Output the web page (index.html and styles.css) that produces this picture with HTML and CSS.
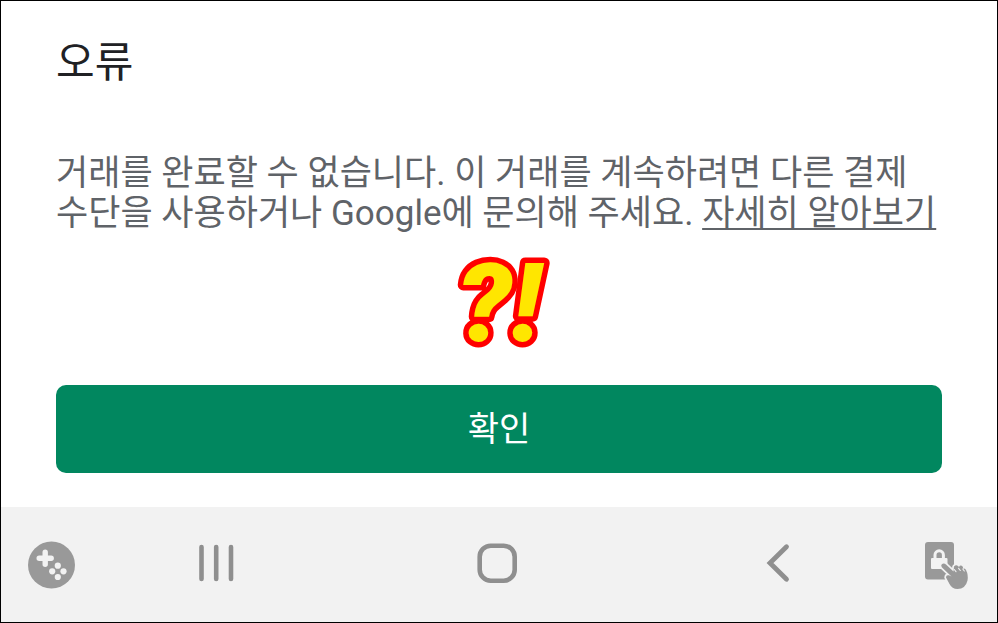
FILE: index.html
```html
<!DOCTYPE html>
<html lang="ko">
<head>
<meta charset="utf-8">
<meta name="viewport" content="width=device-width, initial-scale=1">
<title>오류</title>
<link rel="stylesheet" href="styles.css">
</head>
<body>
<main class="sheet">
  <h1 class="title">오류</h1>
  <p class="message">거래를 완료할 수 없습니다. 이 거래를 계속하려면 다른 결제 수단을 사용하거나 Google에 문의해 주세요. <a class="more" href="#">자세히 알아보기</a></p>
  <svg class="mark" width="112" height="100" viewBox="0 0 112 100"><text x="56" y="90" text-anchor="middle">?!</text></svg>
  <button class="confirm" type="button">확인</button>
</main>
<nav class="navbar">
  <button class="nav-button edge" type="button" aria-label="게임 도구">
    <svg width="48" height="48" viewBox="0 0 48 48">
      <circle cx="24.500" cy="24" r="23.5" fill="#999"/>
      <path d="M18.200 11.3v12M12.200 17.3h12" stroke="#f2f2f2" stroke-width="5.4" stroke-linecap="round"/>
      <g fill="#f2f2f2"><circle cx="30.800" cy="24.7" r="3.1"/><circle cx="25.200" cy="30.3" r="3.1"/><circle cx="36.500" cy="30.3" r="3.1"/><circle cx="30.800" cy="36" r="3.1"/></g>
    </svg>
  </button>
  <button class="nav-button" type="button" aria-label="최근 앱">
    <svg width="40" height="40" viewBox="0 0 40 40"><path d="M5.5 4v32M20.2 4v32M35 4v32" stroke="#8f8f8f" stroke-width="4.6" stroke-linecap="round"/></svg>
  </button>
  <button class="nav-button" type="button" aria-label="홈">
    <svg width="40" height="40" viewBox="0 0 40 40"><rect x="2.7" y="2.7" width="35" height="35" rx="11" fill="none" stroke="#8f8f8f" stroke-width="4.600"/></svg>
  </button>
  <button class="nav-button" type="button" aria-label="뒤로">
    <svg width="40" height="40" viewBox="0 0 40 40"><path d="M28.5 3.8L12 20l16.500 16.200" fill="none" stroke="#8f8f8f" stroke-width="4.800" stroke-linecap="round"/></svg>
  </button>
  <button class="nav-button edge" type="button" aria-label="화면 터치 잠금">
    <svg width="48" height="48" viewBox="0 0 48 48">
      <rect x="2" y="1" width="29" height="37.500" rx="3" fill="#999"/>
      <path d="M12 18v-4a4.200 4.200 0 0 1 8.400 0v4" fill="none" stroke="#f2f2f2" stroke-width="3"/>
      <rect x="8" y="17" width="16.500" height="11" rx="1" fill="#f2f2f2"/>
      <path d="M18.800 23.300Q20.800 21.500 23 23.500L30.500 30.500L31 25.500Q33 23 35.300 25.200L36 26Q37.500 23.300 39.800 25.700L40.300 28Q41.800 26.500 43 29Q45.500 34 44.500 39.500Q42.500 48 34.500 48Q29 48 26.500 43L23 36.500Q23 33.500 26 34.300L28.500 35.500L19 26.500Q17.500 24.700 18.800 23.300Z" fill="#999" stroke="#f2f2f2" stroke-width="3.4" stroke-linejoin="round" paint-order="stroke"/>
      <path d="M31.300 28.500l1.700 2.200M35.600 27.300l1.700 2.200M39.800 28l1.500 2" stroke="#f2f2f2" stroke-width="1.100" stroke-linecap="round"/>
    </svg>
  </button>
</nav>
</body>
</html>
```
FILE: styles.css
```css
* {
  box-sizing: border-box;
}

body {
  display: flex;
  flex-direction: column;
  min-height: 100vh;
  margin: 0;
  border: 1px solid #000;
  background: #fff;
  color: #5f6368;
  font-family: Roboto, "Noto Sans CJK KR", sans-serif;
}

.sheet {
  display: flex;
  flex: 1;
  flex-direction: column;
  padding: 34px 55px;
}

.title {
  margin: 0;
  color: #202124;
  font-size: 42px;
  font-weight: 400;
  line-height: 56px;
}

.message {
  margin: 63px 0 0;
  font-size: 35px;
  line-height: 40px;
  word-break: keep-all;
}

.more {
  color: inherit;
  text-decoration-thickness: 2px;
  text-underline-offset: 3px;
}

.mark {
  align-self: center;
  margin-top: 17px;
  overflow: visible;
  fill: #ffe600;
  stroke: #f00;
  stroke-width: 11px;
  stroke-linejoin: round;
  paint-order: stroke;
  font: italic 900 110px Roboto, sans-serif;
}

.confirm {
  height: 88px;
  margin-top: auto;
  padding: 0 0 6px;
  border: 0;
  border-radius: 10px;
  background: #01875f;
  color: #fff;
  font: inherit;
  font-size: 34px;
}

.navbar {
  display: grid;
  grid-template-columns: 74px 1fr 1fr 1fr 78px;
  align-items: center;
  justify-items: center;
  height: 115px;
  padding-bottom: 4px;
  background: #f2f2f2;
}

.nav-button {
  display: flex;
  padding: 0;
  border: 0;
  background: none;
}

.edge {
  justify-self: end;
  padding-top: 4px;
}

.edge:last-child {
  padding-right: 26px;
}
```
